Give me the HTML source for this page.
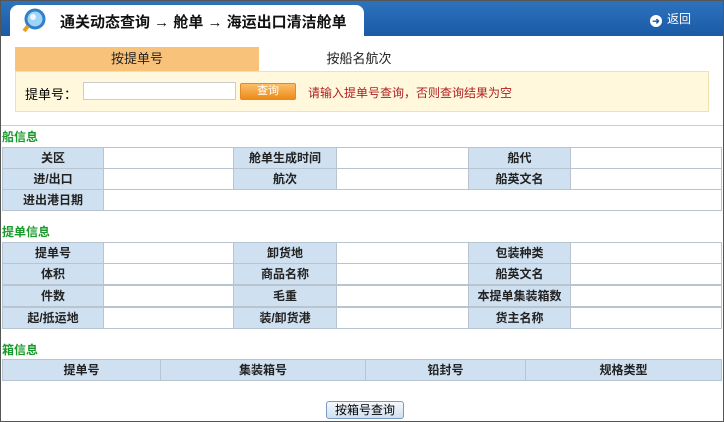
<!DOCTYPE html>
<html><head><meta charset="utf-8"><style>
*{margin:0;padding:0;box-sizing:border-box}
body{width:724px;height:422px;overflow:hidden;background:#fff;font-family:"Liberation Sans","Noto Sans CJK SC",sans-serif;font-size:12px;position:relative}
.frame{position:absolute;left:0;top:0;width:724px;height:422px;border:1px solid #555;pointer-events:none}
.hdr{position:absolute;left:0;top:0;width:724px;height:36px;background:linear-gradient(#2f73bd,#1a5aa6)}
.tab{position:absolute;left:10px;top:5px;width:354px;height:33px;background:#fff;border-radius:8px 8px 0 0}
.title{position:absolute;left:60px;top:11px;font-size:15px;font-weight:bold;color:#111}
.ret{position:absolute;left:650px;top:10px;color:#fff;font-size:12px}
.ret b{display:inline-block;width:12px;height:12px;border-radius:50%;background:#fff;color:#1a5aa6;font-size:9px;line-height:12px;text-align:center;vertical-align:-1px;margin-right:5px}
.t1{position:absolute;left:15px;top:47px;width:244px;height:24px;background:#f8c27a;text-align:center;line-height:24px;font-size:13px;color:#222}
.t2{position:absolute;left:259px;top:47px;width:200px;height:24px;text-align:center;line-height:24px;font-size:13px;color:#222}
.yp{position:absolute;left:15px;top:71px;width:694px;height:41px;background:#fff8dc;border:1px solid #f0e2b0}
.sep{position:absolute;left:0;top:125px;width:724px;height:1px;background:#ccc}
.sec{position:absolute;left:2px;font-weight:bold;color:#1a9a2a;font-size:12px}
.c{position:absolute;height:22px;border:1px solid #b8c4d0;line-height:20px;text-align:center;font-weight:bold;color:#222}
.l{background:#cfe0f0}
.btn{position:absolute;left:326px;top:401px;width:78px;height:18px;border:1px solid #7a9cc0;border-radius:3px;background:linear-gradient(#f4f8fc,#cfe0f0);text-align:center;line-height:16px;font-size:12px}
</style></head><body>
<div class="hdr"></div>
<div class="tab"></div>
<svg style="position:absolute;left:22px;top:8px" width="28" height="26"><circle cx="13" cy="11" r="9" fill="#9ed4f5" stroke="#2f80c8" stroke-width="3"/><circle cx="11" cy="9" r="3" fill="#fff" opacity=".8"/><path d="M6 18 L2 23" stroke="#e8a020" stroke-width="4"/></svg>
<div class="title">通关动态查询 → 舱单 → 海运出口清洁舱单</div>
<div class="ret"><b>➜</b>返回</div>
<div class="t1">按提单号</div>
<div class="t2">按船名航次</div>
<div class="yp">
<span style="position:absolute;left:9px;top:12px;font-size:13px">提单号：</span>
<div style="position:absolute;left:67px;top:10px;width:153px;height:18px;background:#fff;border:1px solid #ccc"></div>
<div style="position:absolute;left:224px;top:11px;width:56px;height:17px;background:linear-gradient(#fbbf6a,#ee8a1a);border:1px solid #e08a30;border-radius:2px;color:#fff;text-align:center;font-size:11px;line-height:15px">查询</div>
<span style="position:absolute;left:292px;top:12px;color:#b02020;font-size:12px">请输入提单号查询，否则查询结果为空</span>
</div>
<div class="sep"></div>
<div class="sec" style="top:128px">船信息</div>
<div class="c l" style="left:2px;top:147px;width:102px">关区</div><div class="c" style="left:103px;top:147px;width:131px"></div>
<div class="c l" style="left:233px;top:147px;width:104px">舱单生成时间</div><div class="c" style="left:336px;top:147px;width:133px"></div>
<div class="c l" style="left:468px;top:147px;width:103px">船代</div><div class="c" style="left:570px;top:147px;width:152px"></div>
<div class="c l" style="left:2px;top:168px;width:102px">进/出口</div><div class="c" style="left:103px;top:168px;width:131px"></div>
<div class="c l" style="left:233px;top:168px;width:104px">航次</div><div class="c" style="left:336px;top:168px;width:133px"></div>
<div class="c l" style="left:468px;top:168px;width:103px">船英文名</div><div class="c" style="left:570px;top:168px;width:152px"></div>
<div class="c l" style="left:2px;top:189px;width:102px">进出港日期</div><div class="c" style="left:103px;top:189px;width:619px"></div>
<div class="sec" style="top:223px">提单信息</div>
<div class="c l" style="left:2px;top:242px;width:102px">提单号</div><div class="c" style="left:103px;top:242px;width:131px"></div>
<div class="c l" style="left:233px;top:242px;width:104px">卸货地</div><div class="c" style="left:336px;top:242px;width:133px"></div>
<div class="c l" style="left:468px;top:242px;width:103px">包装种类</div><div class="c" style="left:570px;top:242px;width:152px"></div>
<div class="c l" style="left:2px;top:263px;width:102px">体积</div><div class="c" style="left:103px;top:263px;width:131px"></div>
<div class="c l" style="left:233px;top:263px;width:104px">商品名称</div><div class="c" style="left:336px;top:263px;width:133px"></div>
<div class="c l" style="left:468px;top:263px;width:103px">船英文名</div><div class="c" style="left:570px;top:263px;width:152px"></div>
<div class="c l" style="left:2px;top:285px;width:102px">件数</div><div class="c" style="left:103px;top:285px;width:131px"></div>
<div class="c l" style="left:233px;top:285px;width:104px">毛重</div><div class="c" style="left:336px;top:285px;width:133px"></div>
<div class="c l" style="left:468px;top:285px;width:103px">本提单集装箱数</div><div class="c" style="left:570px;top:285px;width:152px"></div>
<div class="c l" style="left:2px;top:307px;width:102px">起/抵运地</div><div class="c" style="left:103px;top:307px;width:131px"></div>
<div class="c l" style="left:233px;top:307px;width:104px">装/卸货港</div><div class="c" style="left:336px;top:307px;width:133px"></div>
<div class="c l" style="left:468px;top:307px;width:103px">货主名称</div><div class="c" style="left:570px;top:307px;width:152px"></div>
<div class="sec" style="top:341px">箱信息</div>
<div class="c l" style="left:2px;top:359px;width:159px">提单号</div>
<div class="c l" style="left:160px;top:359px;width:206px">集装箱号</div>
<div class="c l" style="left:365px;top:359px;width:161px">铅封号</div>
<div class="c l" style="left:525px;top:359px;width:197px">规格类型</div>
<div class="btn">按箱号查询</div>
<div class="frame"></div>
</body></html>
